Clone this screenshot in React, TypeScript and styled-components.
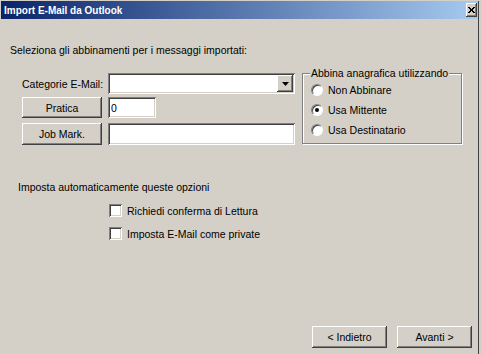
import styled, { createGlobalStyle } from "styled-components";

const GlobalStyle = createGlobalStyle`
  html, body {
    margin: 0;
    padding: 0;
    background: #d4d0c8;
  }
  body {
    font-family: "Liberation Sans", Arial, sans-serif;
    font-size: 10.5px;
    color: #000;
  }
`;

const raised = `
  box-shadow: inset -1px -1px #404040, inset 1px 1px #ffffff,
    inset -2px -2px #808080, inset 2px 2px #d4d0c8;
`;

const sunken = `
  box-shadow: inset 1px 1px #808080, inset -1px -1px #ffffff,
    inset 2px 2px #404040, inset -2px -2px #d4d0c8;
`;

const Frame = styled.div`
  width: 482px;
  height: 354px;
  box-sizing: border-box;
  padding: 1px 0 0 1px;
  background: #d4d0c8;
  overflow: hidden;
`;

const Window = styled.div`
  width: 478px;
  height: 353px;
  box-sizing: border-box;
  border-right: 1px solid #404040;
  display: flex;
  flex-direction: column;
`;

const TitleBar = styled.div`
  height: 18px;
  display: flex;
  align-items: center;
  justify-content: space-between;
  padding-left: 3px;
  background: linear-gradient(to right, #0a246a, #a6caf0);
`;

const Title = styled.span`
  color: #fff;
  font-weight: bold;
  font-size: 10px;
  font-family: "Liberation Sans", Arial, sans-serif;
`;

const CloseButton = styled.div`
  width: 11px;
  height: 14px;
  margin-right: 1px;
  background: #d4d0c8;
  display: flex;
  align-items: center;
  justify-content: center;
  ${raised}
`;

const Body = styled.div`
  flex: 1;
  display: flex;
  flex-direction: column;
  padding: 0 6px 6px 9px;
`;

const Text = styled.div<{ $top?: number; $left?: number }>`
  margin-top: ${(p) => p.$top ?? 0}px;
  margin-left: ${(p) => p.$left ?? 0}px;
  line-height: 13px;
  white-space: nowrap;
`;

const MainRow = styled.div`
  display: flex;
  align-items: flex-start;
  margin-top: 10px;
`;

const FieldColumn = styled.div`
  display: flex;
  flex-direction: column;
  margin-left: 12px;
  margin-top: 6px;
`;

const FieldRow = styled.div<{ $top?: number; $h: number }>`
  display: flex;
  align-items: center;
  gap: 6px;
  height: ${(p) => p.$h}px;
  margin-top: ${(p) => p.$top ?? 0}px;
`;

const FieldLabel = styled.div`
  width: 80px;
  text-align: right;
  white-space: nowrap;
`;

const PushButton = styled.div<{ $w: number; $h: number }>`
  width: ${(p) => p.$w}px;
  height: ${(p) => p.$h}px;
  box-sizing: border-box;
  display: flex;
  align-items: center;
  justify-content: center;
  background: #d4d0c8;
  ${raised}
`;

const TextField = styled.div<{ $w: number; $h: number }>`
  width: ${(p) => p.$w}px;
  height: ${(p) => p.$h}px;
  box-sizing: border-box;
  padding-left: 3px;
  display: flex;
  align-items: center;
  background: #fff;
  ${sunken}
`;

const Combo = styled.div`
  width: 187px;
  height: 21px;
  box-sizing: border-box;
  padding: 2px;
  display: flex;
  justify-content: flex-end;
  background: #fff;
  ${sunken}
`;

const DropButton = styled.div`
  width: 16px;
  height: 17px;
  display: flex;
  align-items: center;
  justify-content: center;
  background: #d4d0c8;
  ${raised}
`;

const GroupBox = styled.fieldset`
  width: 160px;
  height: 77px;
  box-sizing: border-box;
  margin: 0 0 0 7px;
  padding: 0 0 0 8px;
  border: 1px solid #808080;
  box-shadow: inset 1px 1px #fff, 1px 1px #fff;
`;

const Legend = styled.legend`
  padding: 0 1px;
  margin-left: -1px;
  line-height: 13px;
  background: #d4d0c8;
  white-space: nowrap;
`;

const OptionRow = styled.div`
  display: flex;
  align-items: center;
  gap: 5px;
  height: 20px;
  white-space: nowrap;
`;

const RadioCircle = styled.span`
  width: 12px;
  height: 12px;
  flex: none;
  box-sizing: border-box;
  border-radius: 50%;
  border: 1px solid;
  border-color: #808080 #fff #fff #808080;
  background: #fff;
  box-shadow: inset 1px 1px #404040;
  display: flex;
  align-items: center;
  justify-content: center;
`;

const RadioDot = styled.span`
  width: 4px;
  height: 4px;
  border-radius: 50%;
  background: #000;
`;

const CheckList = styled.div`
  display: flex;
  flex-direction: column;
  gap: 10px;
  margin-top: 10px;
  margin-left: 99px;
`;

const CheckRow = styled.div`
  display: flex;
  align-items: center;
  gap: 5px;
  height: 13px;
  white-space: nowrap;
`;

const CheckBox = styled.span`
  width: 13px;
  height: 13px;
  flex: none;
  box-sizing: border-box;
  background: #fff;
  ${sunken}
`;

const Footer = styled.div`
  margin-top: auto;
  display: flex;
  justify-content: flex-end;
  gap: 10px;
`;

const radios = [
  { label: "Non Abbinare", checked: false },
  { label: "Usa Mittente", checked: true },
  { label: "Usa Destinatario", checked: false },
];

const checks = ["Richiedi conferma di Lettura", "Imposta E-Mail come private"];

export default function App() {
  return (
    <>
      <GlobalStyle />
      <Frame>
        <Window>
          <TitleBar>
            <Title>Import E-Mail da Outlook</Title>
            <CloseButton>
              <svg width="7" height="6" viewBox="0 0 7 6">
                <path d="M0 0 L6 6 M1 0 L7 6 M6 0 L0 6 M7 0 L1 6" stroke="#000" strokeWidth="1" />
              </svg>
            </CloseButton>
          </TitleBar>
          <Body>
            <Text $top={25}>Seleziona gli abbinamenti per i messaggi importati:</Text>
            <MainRow>
              <FieldColumn>
                <FieldRow $h={21}>
                  <FieldLabel>Categorie E-Mail:</FieldLabel>
                  <Combo>
                    <DropButton>
                      <svg width="7" height="4" viewBox="0 0 7 4">
                        <path d="M0 0 H7 L3.5 4 Z" fill="#000" />
                      </svg>
                    </DropButton>
                  </Combo>
                </FieldRow>
                <FieldRow $h={21} $top={3}>
                  <PushButton $w={80} $h={21}>Pratica</PushButton>
                  <TextField $w={48} $h={21}>0</TextField>
                </FieldRow>
                <FieldRow $h={22} $top={5}>
                  <PushButton $w={80} $h={22}>Job Mark.</PushButton>
                  <TextField $w={187} $h={22} />
                </FieldRow>
              </FieldColumn>
              <GroupBox>
                <Legend>Abbina anagrafica utilizzando</Legend>
                {radios.map((r) => (
                  <OptionRow key={r.label}>
                    <RadioCircle>{r.checked && <RadioDot />}</RadioCircle>
                    {r.label}
                  </OptionRow>
                ))}
              </GroupBox>
            </MainRow>
            <Text $top={36} $left={8}>Imposta automaticamente queste opzioni</Text>
            <CheckList>
              {checks.map((c) => (
                <CheckRow key={c}>
                  <CheckBox />
                  {c}
                </CheckRow>
              ))}
            </CheckList>
            <Footer>
              <PushButton $w={75} $h={22}>&lt; Indietro</PushButton>
              <PushButton $w={75} $h={22}>Avanti &gt;</PushButton>
            </Footer>
          </Body>
        </Window>
      </Frame>
    </>
  );
}
